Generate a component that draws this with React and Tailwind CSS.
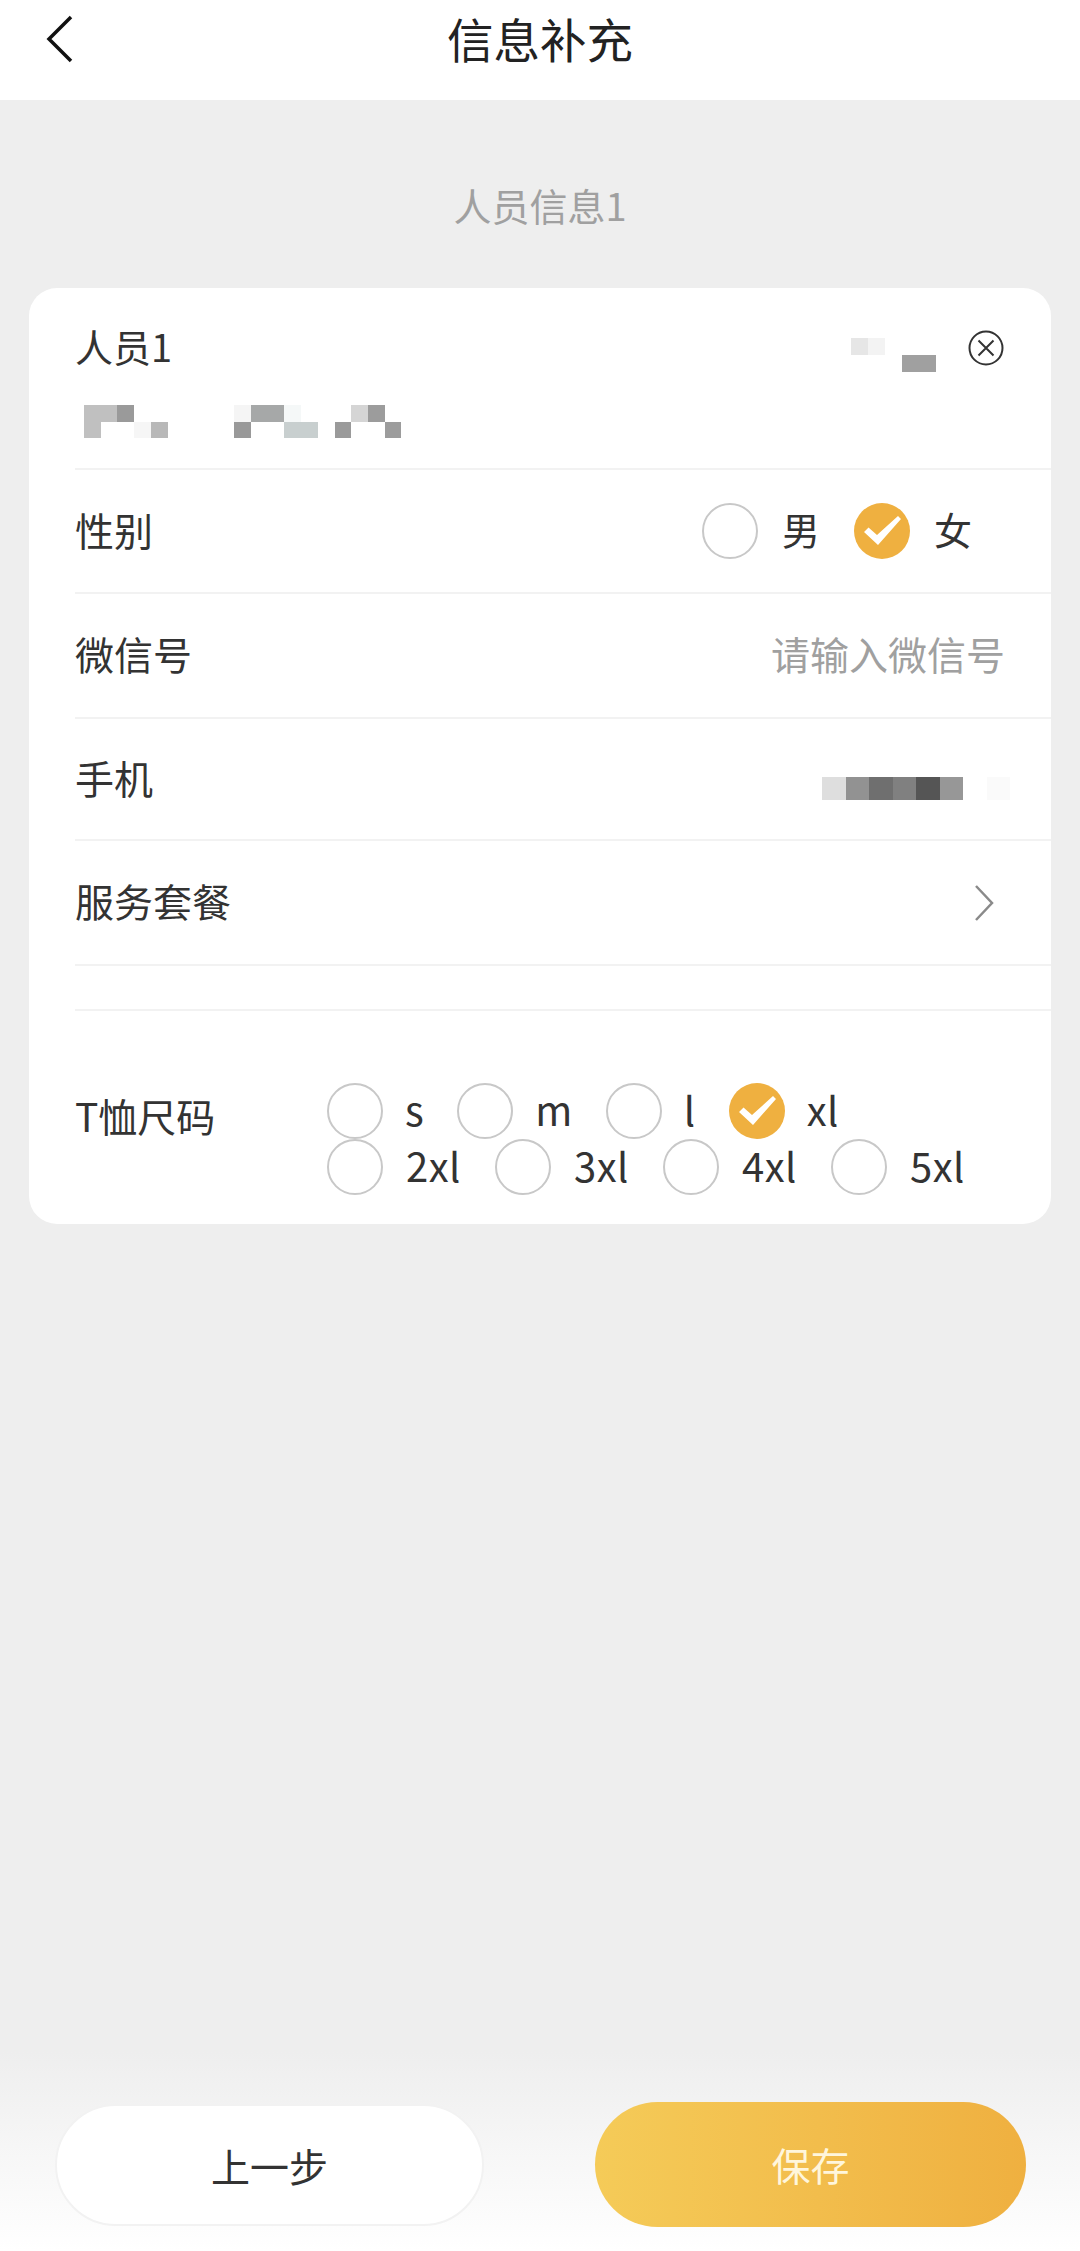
const font = 'font-["Noto_Sans_CJK_SC","Noto_Sans",sans-serif]';

// pixelated blur patches: [col, row, span, colour]
const nameBlur = [
  [0, 0, 2, '#c0c0c0'], [2, 0, 1, '#9a9a9a'], [0, 1, 1, '#c0c0c0'], [3, 1, 1, '#f6f6f6'], [4, 1, 1, '#b8b8b8'],
  [9, 0, 1, '#f5f5f5'], [10, 0, 2, '#a6a8a8'], [12, 0, 1, '#f5f8f8'], [9, 1, 1, '#999999'], [12, 1, 2, '#c8cfcf'],
  [15, 1, 1, '#9a9a9a'], [16, 0, 1, '#d5d5d5'], [17, 0, 1, '#9c9c9c'], [18, 1, 1, '#9c9c9c'],
];
const idBlur = [
  [0, 0, 1, '#e6e6e6'], [1, 0, 1, '#f3f3f3'], [3, 1, 2, '#a0a0a0'],
];
const phoneBlur = [
  [0, 0, 1, '#dedede'], [1, 0, 1, '#929292'], [2, 0, 1, '#6f6f6f'], [3, 0, 1, '#808080'],
  [4, 0, 1, '#555555'], [5, 0, 1, '#979797'], [7, 0, 1, '#fafafa'],
];

function Mosaic({ cells, size, cols, rows, h = size }) {
  return (
    <svg width={cols * size} height={rows * h} className="block shrink-0" shapeRendering="crispEdges">
      {cells.map(([x, y, span, fill], i) => (
        <rect key={i} x={x * size} y={y * h} width={span * size} height={h} fill={fill} />
      ))}
    </svg>
  );
}

function Radio({ label, checked, size, short }) {
  const gap = short ? 'mr-[33px]' : 'mr-[34px]';
  const labelGap = short ? 'ml-[22px]' : size ? 'ml-[23px]' : 'ml-[24px]';
  return (
    <div className={`flex items-center h-[56px] ${gap}`}>
      {checked ? (
        <div className="w-[56px] h-[56px] rounded-full bg-[#efb040]">
          <svg width="56" height="56" viewBox="0 0 56 56" fill="#fff">
            <path d="M10 29 L14.5 24.5 L23 32 L44 13 L47 16 L24 42 Z" />
          </svg>
        </div>
      ) : (
        <div className="w-[56px] h-[56px] rounded-full bg-white border-2 border-[#c8c8c8]" />
      )}
      <span className={`${labelGap} -mt-[4px] leading-none text-[#333] ${size ? 'text-[40px] tracking-[0.5px]' : 'text-[38px]'}`}>{label}</span>
    </div>
  );
}

function Row({ label, children, h }) {
  return (
    <div className={`flex items-center justify-between border-b-2 border-[#f2f2f2] pr-[46px] ${h}`}>
      <span className="text-[39px] -mt-[4px] leading-none text-[#333]">{label}</span>
      {children}
    </div>
  );
}

export default function App() {
  return (
    <div className={`${font} w-[1080px] min-h-[2251px] bg-[#eeeeee] flex flex-col`}>
      <header className="relative h-[100px] bg-white flex justify-center pt-[11px]">
        <svg className="absolute left-[44px] top-[14px]" width="32" height="50" viewBox="0 0 32 50" fill="none" stroke="#111" strokeWidth="3.5">
          <path d="M27 3 L5 25 L27 47" />
        </svg>
        <h1 className="text-[46.5px] leading-[54px] font-normal text-[#222]">信息补充</h1>
      </header>

      <div className="h-[188px] flex justify-center pt-[81px]">
        <span className="text-[38px] leading-[48px] text-[#a0a0a0]">人员信息1</span>
      </div>

      <main className="mx-[29px] bg-white rounded-[28px]">
        <div className="h-[182px] ml-[46px] border-b-2 border-[#f2f2f2] pr-[47px]">
          <div className="flex items-center justify-between pt-[36px] h-[84px]">
            <span className="text-[38px] -mt-[4px] leading-none text-[#333]">人员1</span>
            <div className="flex items-center gap-[32px]">
              <div className="mt-[14px]">
                <Mosaic cells={idBlur} size={17} cols={5} rows={2} />
              </div>
              <svg width="36" height="36" viewBox="0 0 36 36" fill="none" stroke="#333" strokeWidth="2">
                <circle cx="18" cy="18" r="16.5" />
                <path d="M10.5 10.5 L25.5 25.5 M25.5 10.5 L10.5 25.5" />
              </svg>
            </div>
          </div>
          <div className="pt-[33px] pl-[9px]">
            <Mosaic cells={nameBlur} size={16.7} cols={19} rows={2} />
          </div>
        </div>

        <div className="ml-[46px]">
          <Row label="性别" h="h-[124px]">
            <div className="flex -mr-[1px]">
              <Radio label="男" />
              <Radio label="女" checked />
            </div>
          </Row>
          <Row label="微信号" h="h-[125px]">
            <span className="text-[39px] -mt-[4px] leading-none text-[#a0a0a0]">请输入微信号</span>
          </Row>
          <Row label="手机" h="h-[122px]">
            <div className="pt-[18px] -mr-[5px]">
              <Mosaic cells={phoneBlur} size={23.5} h={23} cols={8} rows={1} />
            </div>
          </Row>
          <Row label="服务套餐" h="h-[125px]">
            <svg className="mr-[9px]" width="24" height="38" viewBox="0 0 24 38" fill="none" stroke="#8a8a8a" strokeWidth="2.5">
              <path d="M4 2 L20 19 L4 36" />
            </svg>
          </Row>
          <div className="h-[45px] border-b-2 border-[#f2f2f2]" />

          <div className="h-[213px] flex pt-[72px]">
            <span className="w-[252px] shrink-0 pt-[4px] text-[39px] leading-[56px] text-[#333]">T恤尺码</span>
            <div className="flex flex-col">
              <div className="flex">
                <Radio size short label="s" />
                <Radio size short label="m" />
                <Radio size short label="l" />
                <Radio size short label="xl" checked />
              </div>
              <div className="flex">
                <Radio size label="2xl" />
                <Radio size label="3xl" />
                <Radio size label="4xl" />
                <Radio size label="5xl" />
              </div>
            </div>
          </div>
        </div>
      </main>

      <footer className="mt-auto h-[200px] bg-gradient-to-b from-[#eeeeee] to-white flex items-start pl-[55px] pt-[51px] gap-[111px]">
        <button className="mt-[2px] w-[429px] h-[122px] rounded-full bg-white border-2 border-[#f2f2f2] text-[39px] text-[#333]">上一步</button>
        <button className="w-[431px] h-[125px] rounded-full bg-gradient-to-r from-[#f5cb58] to-[#efb040] text-[39px] text-[#fff6dc]">保存</button>
      </footer>
    </div>
  );
}
